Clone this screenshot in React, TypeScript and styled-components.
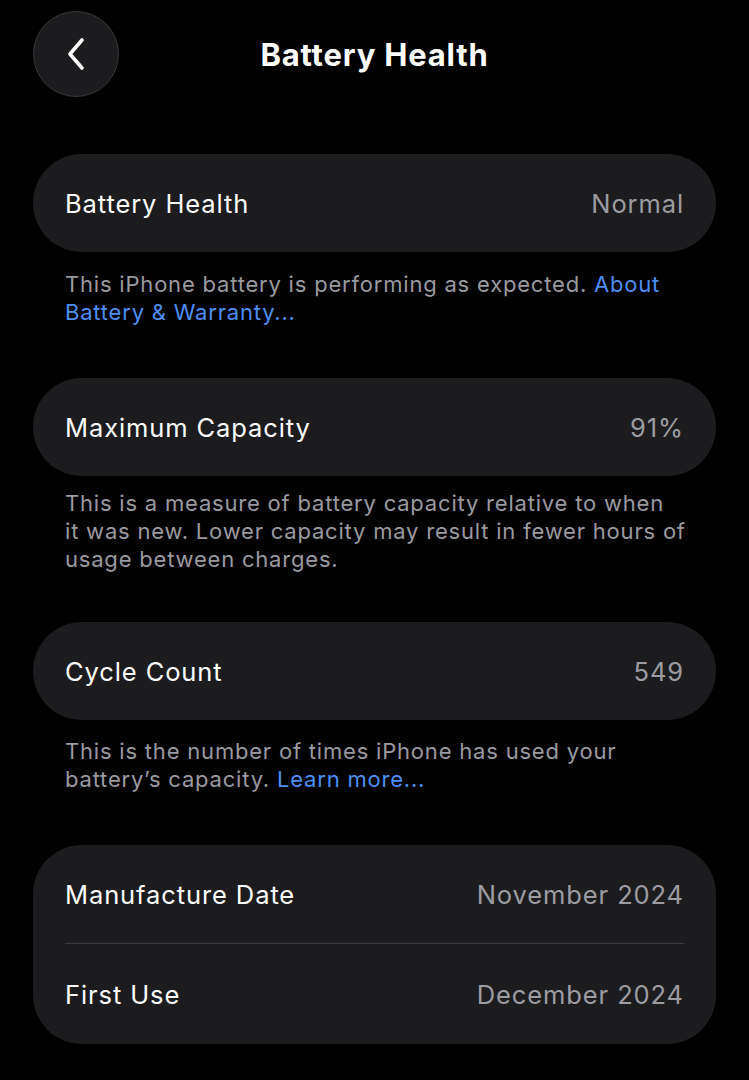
import styled, { createGlobalStyle } from "styled-components";

const GlobalStyle = createGlobalStyle`
  html, body {
    margin: 0;
    padding: 0;
    background: #000;
  }
  body {
    font-family: Inter, "Noto Sans", "Liberation Sans", sans-serif;
    -webkit-font-smoothing: antialiased;
  }
`;

const Page = styled.div`
  width: 749px;
  min-height: 1080px;
  background: #000;
  color: #fff;
  padding: 11px 33px 0 33px;
  box-sizing: border-box;
`;

const Header = styled.header`
  display: grid;
  grid-template-columns: 86px 1fr 86px;
  align-items: center;
  height: 86px;
  margin-bottom: 57px;
`;

const BackButton = styled.button`
  width: 86px;
  height: 86px;
  border-radius: 50%;
  background: #1c1c1e;
  border: 1.5px solid #38383a;
  display: flex;
  align-items: center;
  justify-content: center;
  padding: 0;
  cursor: pointer;
`;

const Title = styled.h1`
  margin: 0;
  text-align: center;
  font-size: 31px;
  font-weight: 700;
  letter-spacing: 0.8px;
`;

const Section = styled.section<{ $gap: number }>`
  margin-bottom: ${(p) => p.$gap}px;
`;

const Card = styled.div`
  background: #1c1c1e;
  border-radius: 49px;
  padding: 0 32px;
`;

const Row = styled.div`
  display: flex;
  align-items: center;
  justify-content: space-between;
  height: 98px;
  font-size: 25.5px;
  letter-spacing: 0.9px;
  & + & {
    border-top: 1.5px solid #3a3a3c;
    height: 100px;
  }
`;

const Label = styled.span`
  color: #fff;
`;

const Value = styled.span`
  color: #9c9ca2;
`;

const Footer = styled.p<{ $top: number }>`
  margin: ${(p) => p.$top}px 0 0 0;
  padding: 0 24px 0 32px;
  font-size: 22px;
  line-height: 28px;
  color: #9a9aa0;
  letter-spacing: 0.8px;
`;

const Link = styled.a`
  color: #4d8ff5;
  text-decoration: none;
`;

const ChevronLeft = () => (
  <svg width="22" height="36" viewBox="0 0 22 36" fill="none">
    <path
      d="M17 4 L5 18 L17 32"
      stroke="#fff"
      strokeWidth="3.6"
      strokeLinecap="round"
      strokeLinejoin="round"
    />
  </svg>
);

export default function App() {
  return (
    <>
      <GlobalStyle />
      <Page>
        <Header>
          <BackButton aria-label="Back">
            <ChevronLeft />
          </BackButton>
          <Title>Battery Health</Title>
          <span />
        </Header>

        <Section $gap={52}>
          <Card>
            <Row>
              <Label>Battery Health</Label>
              <Value>Normal</Value>
            </Row>
          </Card>
          <Footer $top={18}>
            This iPhone battery is performing as expected.{" "}
            <Link href="#">About Battery &amp; Warranty...</Link>
          </Footer>
        </Section>

        <Section $gap={49}>
          <Card>
            <Row>
              <Label>Maximum Capacity</Label>
              <Value>91%</Value>
            </Row>
          </Card>
          <Footer $top={13}>
            This is a measure of battery capacity relative to when
            <br />
            it was new. Lower capacity may result in fewer hours of usage
            between charges.
          </Footer>
        </Section>

        <Section $gap={52}>
          <Card>
            <Row>
              <Label>Cycle Count</Label>
              <Value>549</Value>
            </Row>
          </Card>
          <Footer $top={17}>
            This is the number of times iPhone has used your battery’s
            capacity. <Link href="#">Learn more...</Link>
          </Footer>
        </Section>

        <Section $gap={0}>
          <Card>
            <Row>
              <Label>Manufacture Date</Label>
              <Value>November 2024</Value>
            </Row>
            <Row>
              <Label>First Use</Label>
              <Value>December 2024</Value>
            </Row>
          </Card>
        </Section>
      </Page>
    </>
  );
}
